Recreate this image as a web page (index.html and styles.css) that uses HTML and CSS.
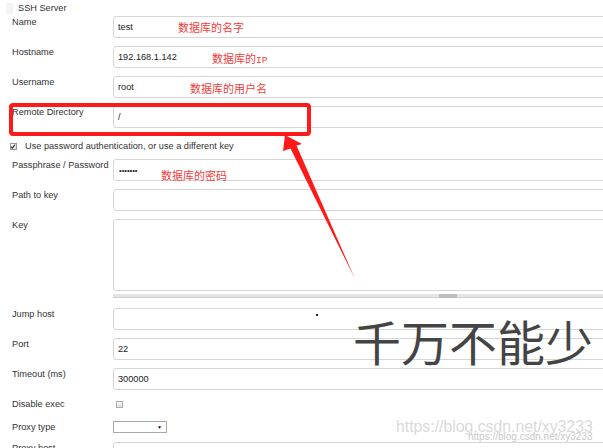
FILE: index.html
```html
<!DOCTYPE html>
<html lang="zh">
<head>
<meta charset="utf-8">
<title>SSH Server</title>
<link rel="stylesheet" href="styles.css">
</head>
<body>
<div class="page">
  <div class="head"><span class="grip"></span><span class="head-title">SSH Server</span></div>

  <div class="row"><div class="label">Name</div><div class="input">test</div></div>
  <div class="row"><div class="label">Hostname</div><div class="input">192.168.1.142</div></div>
  <div class="row"><div class="label">Username</div><div class="input">root</div></div>
  <div class="row"><div class="label">Remote Directory</div><div class="input">/</div></div>

  <div class="check-row"><span class="cb cb-checked"><svg viewBox="0 0 7 7" width="7" height="7"><path d="M1.2 3.6 L2.8 5.3 L5.9 1.4" fill="none" stroke="#333" stroke-width="1.4"/></svg></span><span>Use password authentication, or use a different key</span></div>

  <div class="row"><div class="label">Passphrase / Password</div><div class="input pw">•••••••</div></div>
  <div class="row"><div class="label">Path to key</div><div class="input"></div></div>
  <div class="row row-key">
    <div class="label">Key</div>
    <div class="field">
      <div class="textarea"></div>
      <div class="handle"><span class="handle-thumb"></span></div>
    </div>
  </div>

  <div class="row"><div class="label">Jump host</div><div class="input"></div></div>
  <div class="row"><div class="label">Port</div><div class="input">22</div></div>
  <div class="row"><div class="label">Timeout (ms)</div><div class="input">300000</div></div>

  <div class="row row-small row-disable"><div class="label">Disable exec</div><div class="field"><span class="cb cb-box"></span></div></div>
  <div class="row row-small row-proxy"><div class="label">Proxy type</div><div class="field"><div class="select"><span class="caret">▼</span></div></div></div>
  <div class="row"><div class="label">Proxy host</div><div class="input"></div></div>

  <!-- annotations drawn over the screenshot -->
  <span class="note note-name">数据库的名字</span>
  <span class="note note-ip">数据库的<span class="mono">IP</span></span>
  <span class="note note-user">数据库的用户名</span>
  <span class="note note-pw">数据库的密码</span>
  <div class="redbox"></div>
  <svg class="arrow" width="603" height="448" viewBox="0 0 603 448">
    <polygon points="285,135 302,144 296.5,145.5 355,279 290.5,148.5 283,151" fill="#ff1a1a"/>
  </svg>
  <span class="dot"></span>
  <span class="big">千万不能少</span>
  <span class="wm wm-big">https://blog.csdn.net/xy3233</span>
  <span class="wm wm-small">https://blog.csdn.net/xy3233</span>
</div>
</body>
</html>
```
FILE: styles.css
```css
* { box-sizing: border-box; }
html, body { margin: 0; padding: 0; }
body {
  overflow: hidden;
  background: #fff;
  font-family: "Liberation Sans", Arial, sans-serif;
  font-size: 9.2px;
  color: #333;
}
.page {
  position: relative;
  display: flex;
  flex-direction: column;
  width: 760px;
  height: 448px;
  overflow: hidden;
}
.head {
  flex: none;
  height: 16px;
  display: flex;
  align-items: center;
  gap: 5px;
  padding-left: 6px;
}
.grip {
  width: 7px;
  height: 11px;
  background-color: #f4f4f4;
  background-image: radial-gradient(circle, #d6d6d6 0.6px, transparent 0.7px);
  background-size: 2px 2px;
}
.head-title { color: #333; line-height: 12px; }

.row {
  flex: none;
  display: grid;
  grid-template-columns: 113px 1fr;
  height: 22px;
  margin-bottom: 8px;
}
.label {
  padding-left: 12px;
  line-height: 12px;
  white-space: nowrap;
}
.input {
  height: 22px;
  border: 1px solid #d6d6d6;
  border-radius: 3px;
  padding-left: 4px;
  display: flex;
  align-items: center;
  color: #222;
}
.pw { font-size: 7.5px; letter-spacing: 0; padding-left: 5px; }

.check-row {
  flex: none;
  display: flex;
  align-items: center;
  gap: 8px;
  height: 16px;
  margin: 2px 0 5px;
  padding-left: 10px;
}
.cb {
  width: 7px;
  height: 7px;
  border: 1px solid #9a9a9a;
  background: linear-gradient(#fdfdfd, #dcdcdc);
  display: inline-flex;
}
.cb svg { display: block; margin: -1px 0 0 -1px; }
.cb-box { border-color: #ababab; margin-left: 3px; }

.row-key { height: auto; margin-bottom: 10px; }
.field { display: flex; flex-direction: column; }
.textarea {
  height: 72px;
  border: 1px solid #d6d6d6;
  border-radius: 3px;
}
.handle {
  position: relative;
  height: 4px;
  margin-top: 3px;
  background: #e4e4e4;
  border-bottom: 1px solid #d0d0d0;
}
.handle-thumb {
  position: absolute;
  left: 326px;
  top: 0;
  width: 18px;
  height: 4px;
  background: #bdbdbd;
}

.row-small { height: 12px; }
.row-disable { margin-bottom: 11px; }
.row-disable .field { justify-content: center; }
.row-proxy { margin-bottom: 9px; }
.select {
  width: 54px;
  height: 12px;
  border: 1px solid #a8a8a8;
  background: #fff;
  display: flex;
  align-items: center;
  justify-content: flex-end;
  padding-right: 4px;
}
.caret { font-size: 5px; color: #111; line-height: 5px; }

/* overlays */
.note {
  position: absolute;
  font-family: "Noto Sans CJK SC", sans-serif;
  font-size: 11px;
  line-height: 12px;
  color: #f23c3c;
  white-space: nowrap;
}
.mono { font-family: "Liberation Mono", monospace; font-size: 9.5px; }
.note-name { left: 178px; top: 21px; }
.note-ip { left: 212px; top: 52px; }
.note-user { left: 190px; top: 82px; }
.note-pw { left: 161px; top: 169px; }

.redbox {
  position: absolute;
  left: 9px;
  top: 103px;
  width: 302px;
  height: 33px;
  border: 4px solid #ff1a1a;
  border-radius: 4px;
}
.arrow { position: absolute; left: 0; top: 0; }
.dot {
  position: absolute;
  left: 316px;
  top: 314px;
  width: 2px;
  height: 2px;
  background: #222;
}
.big {
  position: absolute;
  left: 353px;
  top: 316px;
  font-family: "Noto Sans CJK SC", sans-serif;
  font-size: 48px;
  line-height: 48px;
  color: #444;
  white-space: nowrap;
}
.wm {
  position: absolute;
  font-family: "Liberation Sans", Arial, sans-serif;
  white-space: nowrap;
  color: #dadada;
}
.wm-big { left: 396px; top: 418px; font-size: 15.8px; line-height: 18px; }
.wm-small {
  left: 468px;
  top: 431px;
  font-size: 10px;
  line-height: 11px;
  color: #c8c8c8;
  text-shadow: 0 0 1px #fff, 0 0 1px #fff;
}
```
